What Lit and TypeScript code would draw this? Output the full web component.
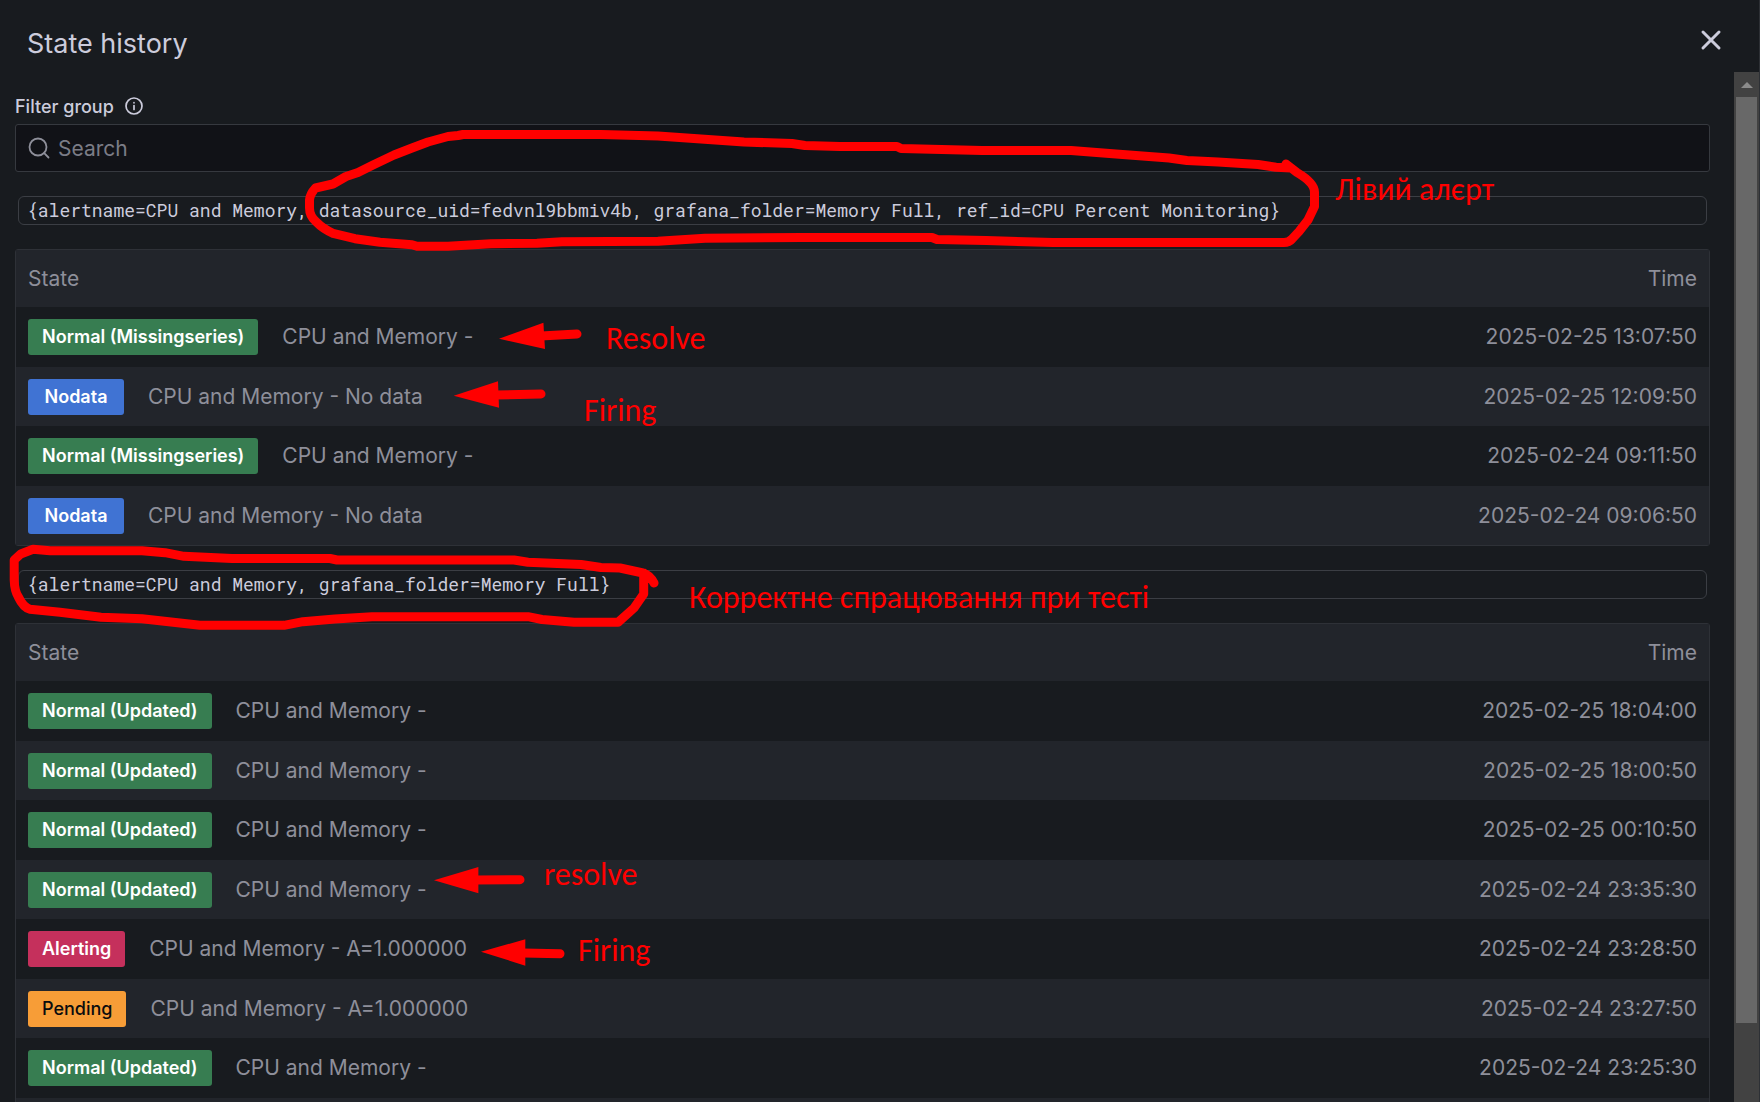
import { LitElement, html, css, svg } from "lit";
import { customElement, property } from "lit/decorators.js";

type Kind = "normal" | "nodata" | "alerting" | "pending";
interface Entry { kind: Kind; state: string; text: string; time: string; }
interface Group { labels: string; entries: Entry[]; }

const entry = (kind: Kind, state: string, text: string, time: string): Entry => ({ kind, state, text, time });

const GROUPS: Group[] = [
  {
    labels: "{alertname=CPU and Memory, datasource_uid=fedvnl9bbmiv4b, grafana_folder=Memory Full, ref_id=CPU Percent Monitoring}",
    entries: [
      entry("normal", "Normal (Missingseries)", "CPU and Memory -", "2025-02-25 13:07:50"),
      entry("nodata", "Nodata", "CPU and Memory - No data", "2025-02-25 12:09:50"),
      entry("normal", "Normal (Missingseries)", "CPU and Memory -", "2025-02-24 09:11:50"),
      entry("nodata", "Nodata", "CPU and Memory - No data", "2025-02-24 09:06:50"),
    ],
  },
  {
    labels: "{alertname=CPU and Memory, grafana_folder=Memory Full}",
    entries: [
      entry("normal", "Normal (Updated)", "CPU and Memory -", "2025-02-25 18:04:00"),
      entry("normal", "Normal (Updated)", "CPU and Memory -", "2025-02-25 18:00:50"),
      entry("normal", "Normal (Updated)", "CPU and Memory -", "2025-02-25 00:10:50"),
      entry("normal", "Normal (Updated)", "CPU and Memory -", "2025-02-24 23:35:30"),
      entry("alerting", "Alerting", "CPU and Memory - A=1.000000", "2025-02-24 23:28:50"),
      entry("pending", "Pending", "CPU and Memory - A=1.000000", "2025-02-24 23:27:50"),
      entry("normal", "Normal (Updated)", "CPU and Memory -", "2025-02-24 23:25:30"),
    ],
  },
];

@customElement("history-group")
class HistoryGroup extends LitElement {
  @property({ attribute: false }) group!: Group;
  @property({ type: Boolean }) more = false;

  static styles = css`
    :host { display: block; }
    .labels {
      margin: 24px 3px;
      height: 29px;
      box-sizing: border-box;
      border: 1px solid #3b3e44;
      border-radius: 6px;
      padding: 0 8px;
      font: 18px/27px "Roboto Mono", "DejaVu Sans Mono", monospace;
      color: #ccccdc;
      white-space: nowrap;
    }
    .table {
      width: 100%;
      box-sizing: border-box;
      border: 1px solid #2e3137;
      border-radius: 3px;
      border-collapse: separate;
      border-spacing: 0;
      color: #8e8f9a;
      font-size: 21px;
      line-height: 32px;
    }
    .cell { padding: 0 12px; height: 60px; text-align: left; font-weight: 400; }
    .head .cell { height: 57px; background: #22252b; }
    .row:nth-child(even) .cell { background: #22252b; height: 59px; }
    .time { text-align: right; }
    .state { display: flex; align-items: center; gap: 24px; }
    .badge {
      box-sizing: border-box;
      min-width: 96px;
      height: 36px;
      padding: 0 14px;
      border-radius: 3px;
      color: #fff;
      font-size: 18px;
      font-weight: 600;
      line-height: 36px;
      text-align: center;
    }
    .normal { background: #377d51; }
    .nodata { background: #4073d3; }
    .alerting { background: #c5305c; }
    .pending { background: #f79d37; color: #0b0c0e; font-weight: 500; }
  `;

  render() {
    return html`
      <div class="labels">${this.group.labels}</div>
      <table class="table">
        <thead>
          <tr class="head">
            <th class="cell" scope="col">State</th>
            <th class="cell time" scope="col">Time</th>
          </tr>
        </thead>
        <tbody>
          ${this.group.entries.map(
            (e) => html`<tr class="row">
              <td class="cell">
                <div class="state"><span class="badge ${e.kind}">${e.state}</span><span>${e.text}</span></div>
              </td>
              <td class="cell time">${e.time}</td>
            </tr>`
          )}
          ${this.more ? html`<tr class="row"><td class="cell" colspan="2"></td></tr>` : ""}
        </tbody>
      </table>
    `;
  }
}

const NOTES: [number, number, string][] = [
  [1335, 200, "Лівий алєрт"],
  [606, 349, "Resolve"],
  [584, 421, "Firing"],
  [689, 608, "Корректне спрацювання при тесті"],
  [544, 885, "resolve"],
  [578, 961, "Firing"],
];

@customElement("hand-notes")
class HandNotes extends LitElement {
  static styles = css`
    :host { position: absolute; top: 0; left: 0; pointer-events: none; }
    .ink { display: block; }
    .line { fill: none; stroke: #f00; stroke-width: 9; stroke-linejoin: round; stroke-linecap: round; }
    .tip { fill: #f00; }
    .note { fill: #f00; font: 32px Carlito, Lato, sans-serif; }
  `;

  render() {
    return html`<svg class="ink" width="1760" height="1102" viewBox="0 0 1760 1102">
      <path class="line" d="M315.500 188L333 184L346 176.500L358 172.500L373 165L394 155L412 148L428 142L448 136.500L458 135.500L463 134.500H601L658 136L701 139L744 142L792 143.500L805 145.500L840 146.500H897L901 148.500L982 150.500H1071L1116 154L1169 158L1187 160.500L1218 162L1258 164.500L1276 167.300L1291 168L1286 164L1297 172.500C1308 179 1314.500 186 1314.500 192V206.500L1308 220L1299 231.500L1292 239Q1289 242.500 1284 242.500H1053L986 240.500L937 239.500L932 237.500H801L705 238.300L658 241.300L562 241.700L537 243.300L491 243.700L448 246.300H417L412 244.700L380 242.300L355 238.700L333 233.300Q323 229 316 221.700Q309.500 216 309.500 208V200Q310 194 315.500 188Z"/>
      <path class="line" d="M654 583Q650 575 643 573L620 568L601 567.500L581 564.500L528 562.300L514 560H337L330 558.500H232L184 556.300L165 552.700L142 550.700H50L33 549.300L20.700 554L14.200 560V580Q14.500 591 18.400 597Q23 607 30 609.300L60 612.300L101 617.300L142 618.700L200 625.300H284L303 621.700L335 619L372 616.700H528L542 619.500L574 622.300H618L634 608L643.700 594V573"/>
      ${svg`
        <path class="line" d="M541 336L577 334"/><path class="tip" d="M499 338.700L543.400 322.700L545 349Z"/>
        <path class="line" d="M496 395L541 394"/><path class="tip" d="M453.700 395.700L498 381.300L499 407.700Z"/>
        <path class="line" d="M476 880L520 879.700"/><path class="tip" d="M434 880.300L478.400 867V893.300Z"/>
        <path class="line" d="M523 953L560 953.700"/><path class="tip" d="M481 951.700L525.300 939.300V965.700Z"/>
      `}
      ${NOTES.map(([x, y, t]) => svg`<text class="note" x=${x} y=${y}>${t}</text>`)}
    </svg>`;
  }
}

@customElement("app-root")
class AppRoot extends LitElement {
  static styles = css`
    :host {
      display: flex;
      flex-direction: column;
      position: relative;
      box-sizing: border-box;
      height: 100vh;
      overflow: hidden;
      border-right: 1px solid #2d3035;
      background: #181b1f;
      color: #ccccdc;
      font-family: Inter, "Liberation Sans", sans-serif;
    }
    .header {
      display: flex;
      flex: none;
      align-items: center;
      justify-content: space-between;
      box-sizing: border-box;
      height: 72px;
      padding: 8px 33px 0 27px;
    }
    .title { margin: 8px 0 0; font-size: 27px; line-height: 32px; font-weight: 400; }
    .close {
      display: flex;
      padding: 3px;
      border: 0;
      background: none;
      color: inherit;
    }
    .body { display: flex; flex: 1; min-height: 0; }
    .content { flex: 1; min-width: 0; overflow: hidden; padding: 24px 24px 0 15px; }
    .label { display: flex; align-items: center; gap: 10px; height: 20px; font-size: 18px; font-weight: 500; }
    .search {
      display: flex;
      align-items: center;
      gap: 8px;
      box-sizing: border-box;
      height: 48px;
      margin-top: 8px;
      padding: 0 12px;
      border: 1px solid #36393f;
      border-radius: 3px;
      background: #111217;
      color: #8e8f9a;
    }
    .field {
      flex: 1;
      min-width: 0;
      padding: 2px 0 0;
      border: 0;
      outline: 0;
      background: none;
      color: #ccccdc;
      font: 21px/32px Inter, "Liberation Sans", sans-serif;
    }
    .field::placeholder { color: #7b7c86; opacity: 1; }
    .scrollbar { display: flex; flex-direction: column; width: 25px; background: #424242; }
    .up { display: flex; align-items: center; justify-content: center; height: 25px; }
    .thumb { height: 92%; max-height: calc(100% - 104px); margin: 0 2px; background: #686868; }
    .icon { display: block; flex: none; fill: none; stroke: currentColor; stroke-linecap: round; }
    .arrow { fill: #8b8b8b; }
  `;

  render() {
    return html`
      <header class="header">
        <h1 class="title">State history</h1>
        <button class="close" type="button" aria-label="Close">
          <svg class="icon" width="24" height="24" viewBox="0 0 24 24" stroke-width="3"><path d="M4 4L20 20M20 4L4 20"/></svg>
        </button>
      </header>
      <div class="body">
        <main class="content">
          <label class="label" for="filter">
            Filter group
            <svg class="icon" width="20" height="20" viewBox="0 0 20 20" stroke-width="1.700">
              <circle cx="10" cy="10" r="8"/><path d="M10 9.500V13.500"/><path d="M10 6.700V6.800"/>
            </svg>
          </label>
          <div class="search">
            <svg class="icon" width="22" height="22" viewBox="0 0 22 22" stroke-width="1.800">
              <circle cx="10" cy="10" r="8.500"/><path d="M16.200 16.200L20.500 20.500"/>
            </svg>
            <input class="field" id="filter" type="text" placeholder="Search" />
          </div>
          ${GROUPS.map((g, i) => html`<history-group .group=${g} ?more=${i === GROUPS.length - 1}></history-group>`)}
        </main>
        <div class="scrollbar">
          <div class="up"><svg width="12" height="6" viewBox="0 0 12 6"><path class="arrow" d="M0 6L6 0L12 6Z"/></svg></div>
          <div class="thumb"></div>
        </div>
      </div>
      <hand-notes></hand-notes>
    `;
  }
}
